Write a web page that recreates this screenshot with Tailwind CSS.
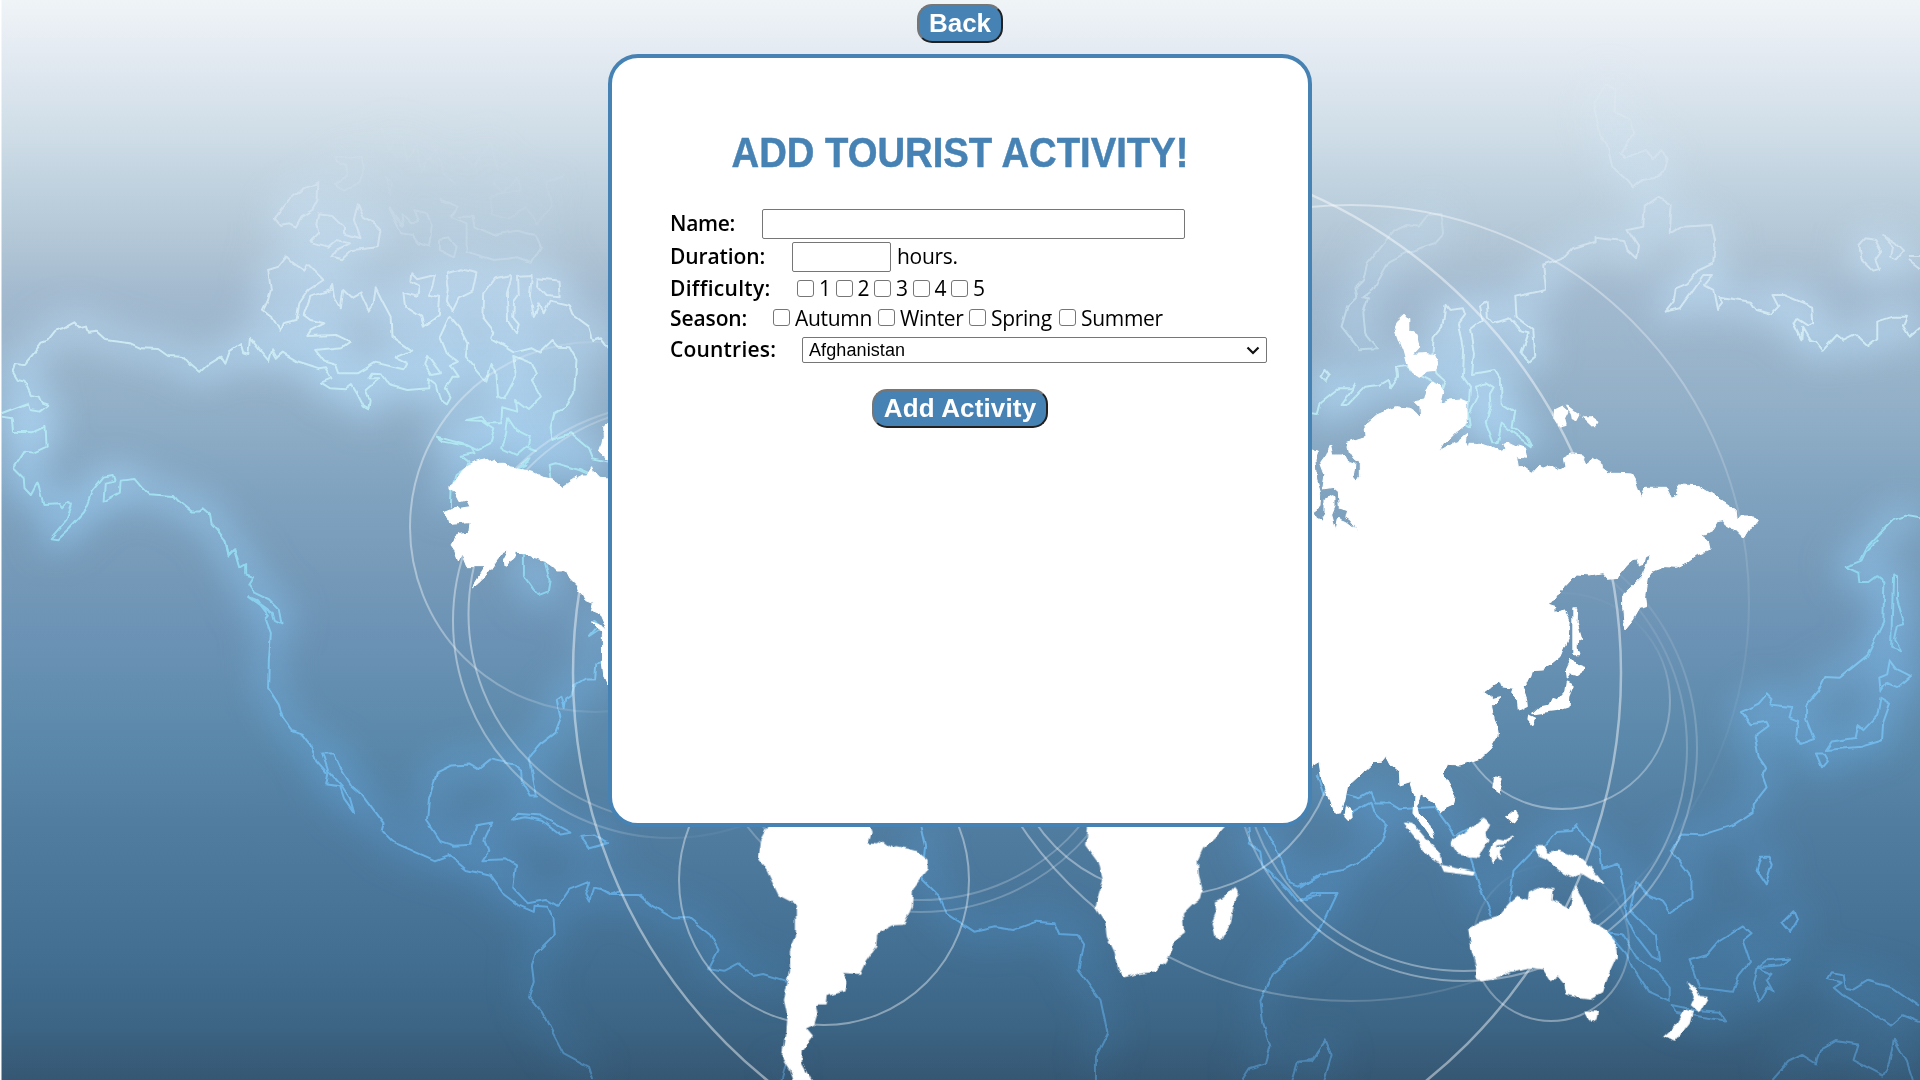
<!DOCTYPE html>
<html lang="en">
<head>
<meta charset="utf-8">
<title>Add Tourist Activity</title>
<script src="https://cdn.jsdelivr.net/npm/@tailwindcss/browser@4"></script>
</head>
<body class="relative h-[1080px] w-[1920px] overflow-hidden bg-[#5585a8] font-['Open_Sans',sans-serif] text-black">

<!-- World map backdrop -->
<svg class="absolute inset-0 h-[1080px] w-[1920px]" viewBox="0 0 1920 1080" aria-hidden="true">
  <defs>
    <linearGradient id="sky" gradientUnits="userSpaceOnUse" x1="0" y1="0" x2="0" y2="1080">
      <stop offset="0" stop-color="#eff4f7"/><stop offset=".055" stop-color="#e2e9f1"/><stop offset=".12" stop-color="#d0dee8"/>
      <stop offset=".185" stop-color="#bccfdd"/><stop offset=".24" stop-color="#adc2d3"/><stop offset=".27" stop-color="#a3bacf"/>
      <stop offset=".37" stop-color="#93b0c8"/><stop offset=".46" stop-color="#7fa2bf"/><stop offset=".52" stop-color="#779bb9"/>
      <stop offset=".585" stop-color="#6c93b5"/><stop offset=".69" stop-color="#5a88aa"/><stop offset=".76" stop-color="#517da1"/>
      <stop offset=".84" stop-color="#487498"/><stop offset=".89" stop-color="#426e91"/><stop offset=".95" stop-color="#3c6484"/><stop offset="1" stop-color="#355773"/>
    </linearGradient>
    <linearGradient id="lineTone" gradientUnits="userSpaceOnUse" x1="0" y1="0" x2="0" y2="1080">
      <stop offset="0" stop-color="#fff" stop-opacity="0"/><stop offset=".12" stop-color="#eef4fa" stop-opacity=".2"/>
      <stop offset=".2" stop-color="#eaf3fb" stop-opacity=".42"/><stop offset=".3" stop-color="#dcf2f8" stop-opacity=".8"/>
      <stop offset=".4" stop-color="#b5ecf4" stop-opacity=".9"/><stop offset=".52" stop-color="#93dcf2" stop-opacity=".9"/>
      <stop offset=".65" stop-color="#78c0f0" stop-opacity=".9"/><stop offset=".85" stop-color="#64b0ea" stop-opacity=".8"/><stop offset="1" stop-color="#5ea6de" stop-opacity=".5"/>
    </linearGradient>
    <linearGradient id="glowTone" gradientUnits="userSpaceOnUse" x1="0" y1="0" x2="0" y2="1080">
      <stop offset="0" stop-color="#e5f2fb" stop-opacity=".1"/><stop offset=".15" stop-color="#d0e6f8" stop-opacity=".35"/><stop offset=".25" stop-color="#c4e2f9" stop-opacity=".62"/>
      <stop offset=".4" stop-color="#b0dbfb" stop-opacity=".72"/><stop offset=".55" stop-color="#8cc8f6" stop-opacity=".55"/>
      <stop offset=".7" stop-color="#6cb4ef" stop-opacity=".42"/><stop offset=".85" stop-color="#56a0dc" stop-opacity=".32"/><stop offset="1" stop-color="#4f98d0" stop-opacity=".15"/>
    </linearGradient>
    <filter id="halo" filterUnits="userSpaceOnUse" x="-60" y="-60" width="2040" height="1200"><feGaussianBlur stdDeviation="17"/></filter>
    <filter id="rough" filterUnits="userSpaceOnUse" x="-60" y="-60" width="2040" height="1200"><feTurbulence type="fractalNoise" baseFrequency=".11" numOctaves="2" seed="4"/><feDisplacementMap in="SourceGraphic" scale="5" xChannelSelector="R" yChannelSelector="G"/></filter>
    <filter id="wavy" filterUnits="userSpaceOnUse" x="-60" y="-60" width="2040" height="1200"><feTurbulence type="fractalNoise" baseFrequency=".09" numOctaves="1" seed="4"/><feDisplacementMap in="SourceGraphic" scale="5" xChannelSelector="R" yChannelSelector="G"/><feGaussianBlur stdDeviation=".35"/></filter>

    <g id="coast" fill="none" stroke-linejoin="round">
      <g transform="translate(0 60) scale(.3954 .3333)">
        <path vector-effect="non-scaling-stroke" d="M4 1060L25 1050L70 1030L75 1050L100 1055L122 1035L105 1028L98 1010L78 1005L62 965L45 960L32 935L38 912L60 915L82 885L105 848L120 842L140 812L160 805L188 787L203 805L220 800L225 818L245 815L268 840L330 850L358 865L400 867L425 888L462 890L480 915L505 940L530 912L560 890L570 908L580 875L608 852L615 880L628 885L632 833L660 875L680 903L688 868L700 893L715 878L750 903L808 925L822 922L838 955L812 968L835 985L875 988L890 975L905 1005L920 1040L932 1048L935 1020L925 990L960 955L932 955L940 938L965 940L985 975L1030 990L1083 985L1085 957L1105 975L1115 1020L1128 1030L1137 1010L1125 985L1142 950L1160 950L1140 915L1158 905L1130 880L1113 830L1137 768L1160 800L1182 850L1178 890L1205 930L1230 965L1243 912L1255 940L1260 1010L1275 1018L1305 950L1298 888L1345 910L1358 945L1345 960L1368 1010L1335 1047L1305 1020L1308 1055L1270 1042L1268 1090L1230 1090L1220 1070L1178 1080L1220 1083L1250 1108L1240 1150L1205 1170L1180 1155L1105 1130L1120 1145L1190 1160L1200 1180L1165 1187L1185 1205L1180 1225L1155 1245L1142 1290L1140 1345M4 1070L30 1075L33 1115L80 1117L115 1098L118 1160L85 1178L62 1175L35 1225L60 1255L62 1285L78 1305L95 1268L110 1332L150 1330L160 1345L170 1328L182 1335L168 1380L128 1435L145 1438L175 1405L210 1360L222 1328L232 1295L262 1250L285 1245L290 1262L265 1268L262 1325L303 1298L305 1262L340 1257L360 1285L375 1303L440 1308L450 1322L485 1355L505 1355L515 1345L530 1360L535 1390L570 1440L578 1483L592 1468L602 1500"/>
        <path vector-effect="non-scaling-stroke" d="M725 590L740 608L770 632L778 612L818 660L780 690L757 730L750 780L715 790L708 812L690 775L665 752L678 720L685 690L678 630L705 620ZM840 672L845 710L862 745L868 690L890 715L912 700L932 752L945 730L950 682L970 730L988 770L990 830L1040 872L998 893L1028 910L1020 928L950 908L905 940L858 940L850 915L820 905L797 870L865 862L885 845L850 825L777 828L785 812L820 790L785 780L768 765L785 710L835 690ZM1040 640L1055 658L1100 645L1095 675L1085 705L1113 710L1110 765L1072 800L1065 770L1025 740L1020 698L1055 710L1060 680L1038 665ZM1130 640L1165 628L1205 640L1195 695L1160 715L1145 752L1130 720L1135 690ZM1295 645L1250 655L1222 700L1220 770L1250 815L1245 835L1300 875L1345 862L1365 875L1395 840L1410 860L1440 862L1458 900L1452 1000L1430 1040L1400 1060L1390 1105L1395 1140L1445 1120L1490 1165L1500 1195L1538 1205M1295 645L1282 700L1285 785L1305 820L1312 790L1298 770L1300 725L1312 705L1310 650L1345 648L1340 710L1350 768L1365 730L1375 760L1390 722L1440 735L1450 765L1490 800L1500 840L1520 832L1540 865M1360 655L1415 662L1418 712L1380 708L1358 680ZM805 368L770 385L730 420L695 475L708 495L732 490L748 500L762 470L790 450L803 420ZM805 460L840 465L870 500L870 520L912 535L895 480L905 430L920 470L945 490L962 510L955 562L890 570L865 598L838 590L850 570L885 550L850 540L830 560L785 545L805 520L800 490ZM1080 885L1115 940L1090 945L1073 915ZM1285 1075L1305 1110L1340 1130L1335 1160L1358 1170L1330 1160L1305 1185L1270 1165L1280 1120ZM1340 1195L1310 1225L1330 1215ZM1395 1258L1390 1215L1405 1210L1465 1230L1495 1245"/>
        <path vector-effect="non-scaling-stroke" stroke-opacity=".45" d="M850 290L915 290L920 325L905 370L870 392L845 375L880 345L875 315L855 305ZM985 445L1000 470L1020 500L1015 460L1040 490L1060 480L1048 450L1080 460L1092 500L1085 560L1060 550L1045 525L1015 520ZM1110 540L1135 535L1155 560L1148 592L1110 570ZM1115 420L1160 440L1140 470L1180 490L1180 575L1250 600L1310 592L1345 607L1368 560L1355 525L1305 512L1250 525L1200 500L1195 470L1160 470"/>
        <path vector-effect="non-scaling-stroke" stroke-opacity=".22" d="M962 200L985 270L1000 235L1015 225L1030 305L1055 250L1065 335L1100 270L1125 345L1150 372M1165 280L1200 320L1240 250L1260 330L1290 300M1245 360L1270 400L1310 355L1318 390L1240 410L1245 460L1290 475L1330 440L1360 490L1395 440L1382 370L1430 340M975 350L992 370L988 405Z"/>
      </g>
      <g transform="translate(0 540) scale(.3954 .3444)">
        <path vector-effect="non-scaling-stroke" d="M570 0L578 45L592 28L605 80L620 70L620 100L640 108L628 130L640 150L680 172L705 200L712 245L695 235L690 215L630 165L650 175L680 220L672 230L685 270L680 350L678 430L705 478L715 515L740 555L765 565L785 595L800 640L830 680L825 710L860 715L870 750L895 790L885 750L865 715L830 670L815 620L845 620L860 660L890 715L915 740L970 825L965 845L990 875L1100 930L1135 915L1180 958L1240 975L1275 1030L1310 1060L1350 1080L1352 1062L1385 1065L1400 1100L1403 1145L1355 1200L1345 1235L1350 1280L1338 1325L1370 1370L1425 1490L1490 1530L1500 1568M1325 35L1325 105L1350 145L1362 160L1385 150L1390 115L1378 65M1538 265L1500 235L1510 250L1488 280L1520 255M1525 345L1508 360L1505 405L1480 405L1452 425L1445 450L1432 460L1428 488L1420 455L1408 465L1418 520L1405 560L1365 595L1340 630L1345 670L1358 745L1340 745L1320 705L1318 670L1300 652L1240 637L1210 665L1190 652L1140 655L1105 675L1085 750L1080 815L1115 875L1150 888L1190 885L1205 828L1245 820L1225 870L1235 905L1220 930L1280 927L1305 945L1298 1010L1335 1055L1380 1045L1410 1065L1440 1015L1490 992L1480 1030L1490 1050L1500 1010L1530 1015L1545 1030L1568 1020M1295 812L1310 795L1365 800L1445 850L1415 855L1370 815L1330 805ZM1468 862L1500 858L1538 880L1490 895Z"/>
      </g>
      <g transform="translate(1300 60) scale(.3954 .3333)">
        <path vector-effect="non-scaling-stroke" d="M775 75L800 90L798 155L835 180L845 220L810 280L825 292L875 270L895 298L910 270L930 295L922 335L895 355L865 360L842 382L828 362L790 320L778 260L760 230L742 130ZM62 930L73 945L65 965L52 950ZM588 1160L540 1120L510 1088L500 1150L490 1150L470 1088L482 1040L480 1005L490 985L470 970L445 980L450 1010L430 1060M30 1060L45 1062L52 1030L100 985L130 985L140 968L135 985L105 1035L120 1035L165 980L200 975L222 960L228 985L248 950L245 920L265 915L300 945L340 968L362 985L368 965L345 940L335 885L338 832L360 800L368 735L378 750L412 745L418 765L402 790L415 870L412 950L430 980L425 1060L430 1105L412 1090M588 1160L575 1130L535 1100L542 1055L510 1030L508 960L492 930L435 942L440 880L430 810L462 780L455 740L472 725L475 770L490 790L530 775L560 815L578 820L560 880L580 905L595 890L590 810L545 770L542 710L622 690L615 615L670 590L690 565L745 545L745 530L820 540L828 570L850 595L855 560L828 510L868 500L872 440L905 412L940 435L935 520L965 500L1040 495L1050 540L1045 610L1010 630L980 670L950 685L945 725L925 755L960 745L1020 645L1042 645L1022 675L1045 690L1055 750L1068 730L1060 710L1140 725L1155 750L1192 762L1210 740L1195 705L1225 705L1295 740L1298 790L1285 798L1255 775L1248 790L1268 838L1270 800L1290 840L1305 845L1322 872L1358 825L1375 842L1405 825L1435 858L1460 835L1460 785L1500 770L1535 770L1525 800L1540 830L1568 800M1430 535L1455 540L1470 575L1455 600L1465 630L1450 635L1420 600L1415 555ZM1475 528L1505 550L1525 575L1510 598L1495 590L1500 560ZM1540 588L1568 588M1540 600L1568 625M1415 1500L1430 1465L1500 1380L1530 1367L1568 1375"/>
        <path vector-effect="non-scaling-stroke" stroke-opacity=".6" d="M355 458L325 462L300 500L270 495L235 515L190 580L170 610L160 660L140 685L145 710L120 740L105 800L150 868L195 865L165 820L160 760L172 715L160 712L185 690L225 605L265 580L340 550L362 520Z"/>
      </g>
      <g transform="translate(1300 540) scale(.3954 .3444)">
        <path vector-effect="non-scaling-stroke" d="M1460 0L1430 35L1420 60L1380 78L1412 95L1415 122L1440 122L1460 105L1478 120L1475 240L1435 335L1365 400L1328 398L1310 440L1280 480L1280 520L1300 578L1265 592L1255 570L1260 525L1238 515L1245 485L1190 478L1195 465L1180 448L1160 475L1115 500L1140 535L1180 528L1185 540L1150 570L1160 630L1178 660L1168 680L1180 718L1145 770L1145 790L1095 828L1015 857L965 855L940 905L990 980L990 1040L935 1083L915 1050L880 1030L850 990L835 1075L900 1150L908 1220L890 1210L850 1150L825 1095L822 1030L805 940L765 955L758 900L720 865L700 825L685 845L650 848L620 890L590 900L540 960L530 1050M1500 100L1510 105L1510 170L1528 245L1512 250L1505 290L1520 320L1495 310ZM1492 348L1510 375L1545 395L1515 425L1485 412L1468 440L1465 400L1485 390ZM1468 458L1492 475L1475 530L1472 582L1420 600L1330 610L1345 585L1405 575L1412 540L1425 552L1460 510ZM1305 620L1325 620L1335 640L1320 660ZM1165 920L1185 920L1193 940L1178 1000L1155 960ZM1248 1078L1258 1105L1240 1138L1220 1110ZM985 1220L1030 1205L1060 1165L1120 1122L1142 1145L1120 1165L1138 1225L1110 1265L1095 1312L1010 1300ZM1240 1215L1215 1235L1160 1240L1170 1250L1195 1260L1180 1280L1195 1310L1180 1300L1160 1340L1148 1290L1158 1240L1180 1220ZM780 1140L815 1145L850 1210L910 1260L935 1300L935 1338L880 1310L840 1240L825 1200ZM940 1350L1000 1365L1060 1370L1075 1395L1020 1385L950 1370ZM1568 1355L1500 1300L1435 1280L1400 1305L1380 1300L1375 1262L1345 1255L1335 1275L1370 1285L1350 1300L1370 1320L1430 1360L1495 1410L1525 1380L1568 1400M1195 1568L1235 1515L1270 1495L1305 1520L1315 1480L1355 1455L1412 1465L1400 1510L1475 1555L1490 1520L1502 1448L1535 1515L1550 1568M120 740L150 750L178 732L190 765L225 765L250 782L340 775L375 830L390 862L425 840M430 920L455 1010L485 1090M115 800L178 760L185 790L220 830L205 880L165 925L110 958L50 970L0 1010M0 1045L40 1025L95 1025L50 1135L0 1195M0 1515L30 1510L65 1453L80 1495L62 1568M42 680L60 740L75 740"/>
      </g>
      <g transform="translate(600 780) scale(.4592 .3333)">
        <path vector-effect="non-scaling-stroke" d="M0 325L25 345L85 345L110 375L160 415L195 415L240 465L258 510L238 565L270 572L300 550L335 588L355 582L410 605M698 141L708 200L700 295L740 350L755 400L815 455L860 442L900 450L950 425L990 430L1000 462L1040 465L1052 490L1042 570L1090 660L1105 760L1080 830L1080 900M1412 141L1415 190L1440 215L1445 260L1500 330L1520 365L1568 345M1445 141L1470 200L1490 260L1500 310L1520 320L1568 290M1568 450L1530 505L1465 580L1438 660L1445 735L1460 800L1450 850L1415 865L1398 900M1568 810L1550 845L1520 845L1508 900M405 850L395 900"/>
      </g>
    </g>
    <mask id="haloMask" maskUnits="userSpaceOnUse" x="0" y="0" width="1920" height="1080"><g filter="url(#halo)"><use href="#coast" stroke="#fff" stroke-width="21"/></g></mask>
    <mask id="lineMask" maskUnits="userSpaceOnUse" x="0" y="0" width="1920" height="1080"><g filter="url(#wavy)"><use href="#coast" stroke="#fff" stroke-width="2"/></g></mask>
    <linearGradient id="fadeR"><stop offset="0" stop-color="#fff" stop-opacity=".4"/><stop offset=".55" stop-color="#fff" stop-opacity=".05"/></linearGradient>
    <linearGradient id="fadeL"><stop offset=".1" stop-color="#fff" stop-opacity=".05"/><stop offset="1" stop-color="#fff" stop-opacity=".4"/></linearGradient>
    <linearGradient id="fadeUp" x1="0" y1="1" x2="0" y2="0"><stop offset="0" stop-color="#fff" stop-opacity=".38"/><stop offset="1" stop-color="#fff" stop-opacity=".01"/></linearGradient>
    <linearGradient id="fadeRing" x1="0" y1="1" x2=".25" y2="0"><stop offset="0" stop-color="#fff" stop-opacity=".4"/><stop offset=".7" stop-color="#fff" stop-opacity=".25"/><stop offset="1" stop-color="#fff" stop-opacity=".03"/></linearGradient>
    <linearGradient id="fadeOrbit" x1="0" y1="0" x2="1" y2=".7"><stop offset="0" stop-color="#fff" stop-opacity=".5"/><stop offset=".6" stop-color="#fff" stop-opacity=".35"/><stop offset="1" stop-color="#fff" stop-opacity=".02"/></linearGradient>
  </defs>

  <rect width="1920" height="1080" fill="url(#sky)"/>
  <rect width="1920" height="1080" fill="url(#glowTone)" mask="url(#haloMask)"/>
  <rect width="1920" height="1080" fill="url(#lineTone)" mask="url(#lineMask)"/>

  <!-- Orbit rings -->
  <g fill="none" stroke-width="2">
    <circle cx="595" cy="527" r="185" stroke="url(#fadeR)"/>
    <circle cx="670" cy="621" r="217" stroke="url(#fadeR)"/>
    <circle cx="676.5" cy="614" r="208" stroke="url(#fadeR)"/>
    <circle cx="1097" cy="673" r="524" stroke="#fff" stroke-opacity=".45" stroke-width="2.5"/>
    <circle cx="1351" cy="603" r="398" stroke="url(#fadeOrbit)"/>
    <circle cx="1464" cy="748" r="223" stroke="url(#fadeUp)"/>
    <circle cx="1464" cy="748" r="233" stroke="url(#fadeUp)"/>
    <circle cx="1562" cy="701" r="108" stroke="url(#fadeRing)"/>
    <circle cx="1551" cy="943" r="78" stroke="url(#fadeUp)"/>
    <circle cx="824" cy="880" r="145" stroke="#fff" stroke-opacity=".4"/>
    <circle cx="921" cy="693" r="207" stroke="#fff" stroke-opacity=".22"/>
    <circle cx="921" cy="693" r="219" stroke="#fff" stroke-opacity=".22"/>
    <circle cx="1172" cy="730" r="165" stroke="#fff" stroke-opacity=".38"/>
  </g>

  <!-- Continents -->
  <g fill="#fff" stroke="#fff" stroke-width="3" stroke-linejoin="round" filter="url(#rough)">
    <g transform="translate(400 400) scale(.3333)">
      <path d="M150 255L165 245L185 215L205 195L225 185L240 180L262 175L275 185L285 180L295 190L310 190L330 203L370 210L400 217L430 232L455 237L485 262L505 248L530 230L530 240L545 225L560 225L575 200L580 215L600 235L640 238L640 880L625 860L612 830L608 800L607 700L595 685L575 665L610 680L622 692L600 640L575 630L580 610L555 600L548 585L535 570L530 555L510 535L500 515L485 510L470 510L455 495L440 485L420 480L400 475L370 458L345 457L345 475L325 490L312 498L310 480L325 450L310 455L290 480L270 510L250 535L235 550L215 565L230 540L245 515L255 500L225 500L200 500L190 475L185 465L175 483L165 455L150 435L165 410L180 402L207 400L210 365L150 370L145 350L130 338L150 330L175 318L180 325L210 320L200 300L180 305L165 275L150 265ZM640 60L608 80L610 110L605 135L598 155L610 165L640 190Z"/>
    </g>
    <g transform="translate(1300 300) scale(.3333)">
      <path d="M20 445L55 450L45 480L50 540L62 580L60 620L40 635L50 655L62 660L75 640L75 600L85 583L105 590L105 620L95 645L108 690L115 655L140 665L175 692L150 660L135 650L140 632L118 625L115 575L100 562L68 567L75 525L62 490L80 465L92 435L98 465L125 465L150 485L165 490L160 530L170 543L178 530L178 490L160 475L148 455L142 430L198 412L195 375L230 345L265 330L290 320L330 325L345 335L362 355L360 320L345 305L370 300L378 270L395 250L420 255L428 275L420 310L450 300L480 297L500 305L502 370L470 395L450 415L430 430L417 453L440 440L470 425L500 400L497 420L508 445L510 430L540 430L570 440L600 455L615 450L608 430L625 425L650 437L675 445L680 475L650 470L655 500L670 500L697 520L720 495L725 505L750 495L778 512L795 500L790 475L815 462L850 465L848 480L855 495L880 475L902 488L905 505L925 520L960 520L995 522L1008 545L1015 570L1025 590L1035 565L1100 565L1115 595L1137 585L1132 555L1195 557L1240 585L1280 610L1308 630L1312 660L1325 645L1355 645L1372 665L1360 680L1345 690L1332 712L1310 690L1280 680L1270 662L1255 665L1240 690L1215 702L1200 700L1225 720L1230 750L1190 765L1155 790L1130 802L1095 800L1060 812L1045 835L1040 870L1037 890L1040 920L1020 925L1000 960L978 987L972 965L968 920L968 885L1000 855L1025 830L1040 795L1048 765L1035 770L1030 790L1015 795L1010 775L985 795L955 832L925 835L910 818L870 825L830 822L790 865L770 895L740 912L765 920L765 937L795 930L808 955L805 1010L780 1070L730 1110L697 1112L690 1135L667 1160L680 1200L682 1220L655 1230L652 1200L635 1180L640 1165L605 1160L600 1145L580 1155L552 1175L580 1195L603 1190L575 1220L583 1260L590 1275L595 1305L572 1345L540 1375L480 1395L440 1393L427 1420L445 1450L465 1490L460 1515L420 1533L400 1510L365 1480L360 1500L350 1515L355 1540L385 1570L403 1615L390 1608L360 1565L342 1540L345 1490L332 1445L300 1455L298 1415L270 1395L258 1372L245 1387L220 1388L180 1425L142 1460L135 1500L125 1535L110 1538L98 1530L85 1490L65 1440L57 1385L36 1398L20 1400Z"/>
      <path d="M290 65L312 45L325 60L325 90L350 105L358 140L335 165L375 162L405 165L416 190L405 210L380 212L358 230L325 205L310 150L297 120L285 85ZM765 330L785 320L802 335L792 355L797 375L780 380L763 355ZM802 320L820 333L838 345L830 360L818 355L815 338ZM850 352L875 352L895 367L882 382ZM820 925L832 925L830 970L843 1015L832 1020L830 1045L838 1060L820 1060ZM815 1080L830 1098L855 1107L830 1125L810 1120L800 1135L798 1115ZM800 1148L818 1158L805 1190L803 1220L770 1230L735 1235L700 1240L720 1222L752 1215L760 1197L775 1202L795 1180ZM687 1247L705 1255L695 1272L685 1260ZM585 1432L605 1437L597 1460L600 1478L580 1465ZM140 1522L153 1535L155 1552L145 1560L136 1550ZM622 1550L645 1530L653 1550L640 1567Z" stroke-width="6"/>
    </g>
    <g transform="translate(1300 540) scale(.3954 .3444)">
      <path d="M262 822L285 825L315 865L355 910L358 940L330 925L290 860ZM358 945L440 965L437 973L365 962ZM388 870L425 845L462 808L480 825L470 850L475 870L458 900L450 920L430 918L400 912L385 885ZM490 880L500 868L520 872L540 862L520 882L498 885L497 893L515 893L503 905L510 925L500 920L495 910L490 940L480 915ZM595 890L618 890L625 910L655 903L715 928L740 955L768 997L745 990L710 965L690 980L655 960L625 925L605 915ZM427 1130L450 1112L500 1095L530 1055L550 1035L577 1047L580 1025L610 1008L640 1015L637 1045L680 1073L690 1040L695 1005L710 1035L722 1070L735 1105L775 1135L797 1165L800 1210L780 1260L765 1315L735 1333L710 1330L675 1318L670 1290L652 1265L635 1280L615 1245L580 1240L530 1253L500 1270L460 1280L445 1272L447 1240L435 1190ZM720 1368L752 1370L748 1395L735 1400ZM980 1287L1003 1310L1010 1325L1032 1328L1010 1370L990 1350L1000 1325ZM975 1365L992 1370L985 1400L948 1455L920 1443L955 1405Z"/>
    </g>
    <g transform="translate(600 780) scale(.4592 .3333)">
      <path d="M370 130L583 130L590 157L582 190L600 195L615 183L635 205L645 200L690 215L712 240L712 270L697 295L680 325L678 380L660 433L635 435L602 460L600 500L577 545L565 580L525 577L537 605L533 633L492 647L490 672L468 672L472 700L465 733L447 745L462 770L440 810L438 850L462 910L425 910L415 870L397 830L405 760L408 700L402 660L415 575L415 510L428 470L428 372L390 345L362 265L345 235L350 180ZM1065 130L1365 130L1340 170L1312 205L1300 240L1303 290L1310 325L1305 355L1290 370L1268 400L1270 460L1248 480L1245 505L1230 545L1210 573L1165 582L1142 590L1130 570L1122 520L1105 470L1102 430L1080 380L1097 300L1087 245L1060 195ZM1383 320L1390 345L1380 365L1372 430L1355 475L1340 472L1333 430L1342 400L1338 365L1360 355Z"/>
    </g>
  </g>
  <rect width="1.5" height="1080" fill="#fff"/>
</svg>

<main class="relative flex flex-col items-center pt-1">
  <button class="h-[39px] w-[86px] rounded-[15px] border-2 border-t-[#767676] border-r-[#212121] border-b-[#212121] border-l-[#767676] bg-[#4682b4] font-['Liberation_Sans',sans-serif] text-[26px] leading-[33px] font-bold text-white">Back</button>

  <form class="mt-[11px] flex h-[773px] w-[704px] flex-col rounded-[30px] border-4 border-[#4682b4] bg-white px-[58px] pt-[70px]">
    <h1 class="h-[48px] origin-center scale-x-[.9] text-center font-['Liberation_Sans',sans-serif] text-[42.500px] leading-[50px] font-bold whitespace-nowrap text-[#4682b4] [-webkit-text-stroke:.5px_#4682b4]">ADD TOURIST ACTIVITY!</h1>

    <div class="mt-[33px] flex h-[30px] items-center">
      <label class="w-[92px] shrink-0 pb-[3px] text-[21px] leading-[28px] font-semibold tracking-[-.3px]">Name:</label>
      <input type="text" class="h-[30px] w-[423px] rounded-[2px] border border-[#767676] bg-white">
    </div>
    <div class="mt-[3px] flex h-[30px] items-center text-[21px] leading-[28px] tracking-[-.3px]">
      <label class="w-[122px] shrink-0 pb-[3px] font-semibold tracking-[-.1px]">Duration:</label>
      <input type="text" class="h-[30px] w-[99px] rounded-[2px] border border-[#767676] bg-white">
      <span class="ml-[6px] pb-[3px]">hours.</span>
    </div>
    <div class="mt-[1px] flex h-[30px] items-center text-[21px] leading-[28px] tracking-[-.3px]">
      <label class="w-[127px] shrink-0 font-semibold tracking-[.3px]">Difficulty:</label>
      <span class="flex w-[38.5px] items-center gap-[5px]"><input type="checkbox" class="size-[17px] appearance-none rounded-[3px] border border-[#767676] bg-white">1</span>
      <span class="flex w-[38.5px] items-center gap-[5px]"><input type="checkbox" class="size-[17px] appearance-none rounded-[3px] border border-[#767676] bg-white">2</span>
      <span class="flex w-[38.5px] items-center gap-[5px]"><input type="checkbox" class="size-[17px] appearance-none rounded-[3px] border border-[#767676] bg-white">3</span>
      <span class="flex w-[38.5px] items-center gap-[5px]"><input type="checkbox" class="size-[17px] appearance-none rounded-[3px] border border-[#767676] bg-white">4</span>
      <span class="flex w-[38.5px] items-center gap-[5px]"><input type="checkbox" class="size-[17px] appearance-none rounded-[3px] border border-[#767676] bg-white">5</span>
    </div>
    <div class="flex h-[30px] items-center pb-px text-[21px] leading-[28px] tracking-[-.3px]">
      <label class="w-[103px] shrink-0 font-semibold tracking-[-.1px]">Season:</label>
      <span class="flex w-[105px] items-center gap-[5px]"><input type="checkbox" class="size-[17px] appearance-none rounded-[3px] border border-[#767676] bg-white">Autumn</span>
      <span class="flex w-[91px] items-center gap-[5px]"><input type="checkbox" class="size-[17px] appearance-none rounded-[3px] border border-[#767676] bg-white">Winter</span>
      <span class="flex w-[90px] items-center gap-[5px]"><input type="checkbox" class="size-[17px] appearance-none rounded-[3px] border border-[#767676] bg-white">Spring</span>
      <span class="flex items-center gap-[5px]"><input type="checkbox" class="size-[17px] appearance-none rounded-[3px] border border-[#767676] bg-white">Summer</span>
    </div>
    <div class="mt-[2px] flex h-[30px] items-center">
      <label class="w-[132px] shrink-0 pb-[3px] text-[21px] leading-[28px] font-semibold tracking-[.2px]">Countries:</label>
      <div class="flex h-[26px] w-[465px] shrink-0 items-center justify-between rounded-[2px] border border-[#767676] bg-white pr-[6px] pl-[6px] font-['Liberation_Sans',sans-serif] text-[18px] leading-[22px] tracking-[.1px]">
        <span>Afghanistan</span>
        <svg class="h-[9px] w-[14px]" viewBox="0 0 14 9" fill="none" stroke="#111" stroke-width="2.2"><path d="M1.5 1.5L7 7l5.500-5.500"/></svg>
      </div>
    </div>
    <button type="button" class="mt-[24px] h-[39px] w-[176px] self-center rounded-[15px] border-2 border-t-[#767676] border-r-[#212121] border-b-[#212121] border-l-[#767676] bg-[#4682b4] font-['Liberation_Sans',sans-serif] text-[26px] leading-[33px] font-bold tracking-[.15px] whitespace-nowrap text-white">Add Activity</button>
  </form>
</main>
</body>
</html>
